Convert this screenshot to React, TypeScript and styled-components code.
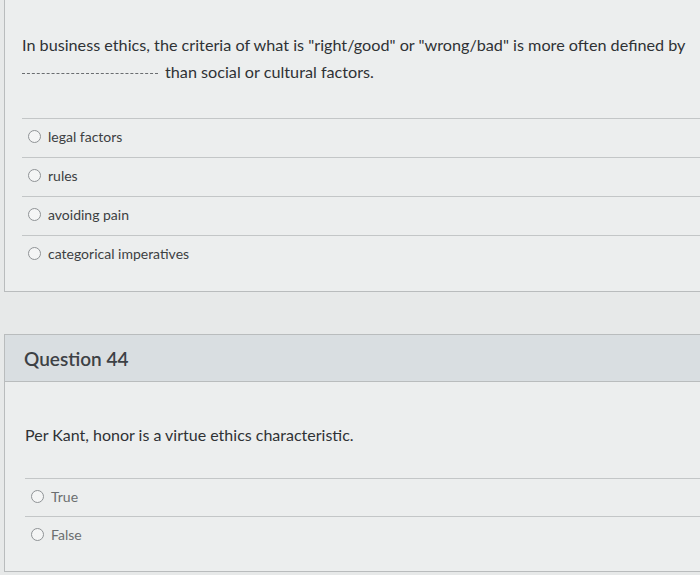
import React from "react";
import styled, { createGlobalStyle } from "styled-components";

const GlobalStyle = createGlobalStyle`
    html, body {
        margin: 0;
        padding: 0;
        background: #e7e9e9;
        font-family: Lato, "Open Sans", sans-serif;
        color: #3a3d40;
    }
    #root {
        overflow: hidden;
        height: 575px;
    }
`;

const Page = styled.div`
    display: flex;
    flex-direction: column;
    gap: 42px;
    padding-left: 4px;
`;

const Card = styled.div<{ $top?: boolean }>`
    margin-right: -12px;
    background: #eceeee;
    border: 1px solid #b9bcbd;
    border-right: none;
    border-top: ${(p) => (p.$top ? "1px solid #b9bcbd" : "none")};
`;

const Header = styled.div`
    height: 46px;
    display: flex;
    align-items: center;
    padding-left: 19px;
    background: #d9dee1;
    border-bottom: 1px solid #b9bcbd;
    font-size: 19px;
    font-weight: 600;
    color: #3d4145;
`;

const Body = styled.div<{ $padTop: number; $padLeft: number; $padBottom: number }>`
    padding: ${(p) => `${p.$padTop}px 0 ${p.$padBottom}px ${p.$padLeft}px`};
`;

const QuestionText = styled.div<{ $size: number; $gap: number }>`
    font-size: ${(p) => p.$size}px;
    line-height: 27px;
    margin-bottom: ${(p) => p.$gap}px;
    color: #2f3235;
`;

const Blank = styled.span`
    display: inline-block;
    width: 136px;
    height: 1px;
    border-bottom: 1px dashed #6a6d70;
    margin-right: 7px;
    vertical-align: 4px;
`;

const Answers = styled.div``;

const Answer = styled.label<{ $height: number; $indent: number; $light?: boolean }>`
    box-sizing: border-box;
    display: flex;
    align-items: center;
    gap: 7px;
    height: ${(p) => p.$height + 1}px;
    padding: 0 0 3px ${(p) => p.$indent}px;
    border-top: 1px solid #c3c6c7;
    font-size: 14px;
    color: ${(p) => (p.$light ? "#6b6e70" : "#3c3f42")};
`;

const Radio = styled.span`
    box-sizing: border-box;
    width: 13px;
    height: 13px;
    border-radius: 50%;
    border: 1.5px solid #8f9396;
    background: #f4f5f5;
    flex-shrink: 0;
`;

export default function App() {
    const first = ["legal factors", "rules", "avoiding pain", "categorical imperatives"];
    const second = ["True", "False"];
    return (
        <>
            <GlobalStyle />
            <Page>
                <Card>
                    <Body $padTop={31} $padLeft={17} $padBottom={17}>
                        <QuestionText $size={16.2} $gap={33}>
                            In business ethics, the criteria of what is "right/good" or "wrong/bad" is more often defined by
                            <br />
                            <Blank />
                            than social or cultural factors.
                        </QuestionText>
                        <Answers>
                            {first.map((a) => (
                                <Answer key={a} $height={38} $indent={6}>
                                    <Radio />
                                    {a}
                                </Answer>
                            ))}
                        </Answers>
                    </Body>
                </Card>
                <Card $top>
                    <Header>Question 44</Header>
                    <Body $padTop={39} $padLeft={20} $padBottom={17}>
                        <QuestionText $size={16} $gap={30}>
                            Per Kant, honor is a virtue ethics characteristic.
                        </QuestionText>
                        <Answers>
                            {second.map((a) => (
                                <Answer key={a} $height={37} $indent={6} $light>
                                    <Radio />
                                    {a}
                                </Answer>
                            ))}
                        </Answers>
                    </Body>
                </Card>
            </Page>
        </>
    );
}
